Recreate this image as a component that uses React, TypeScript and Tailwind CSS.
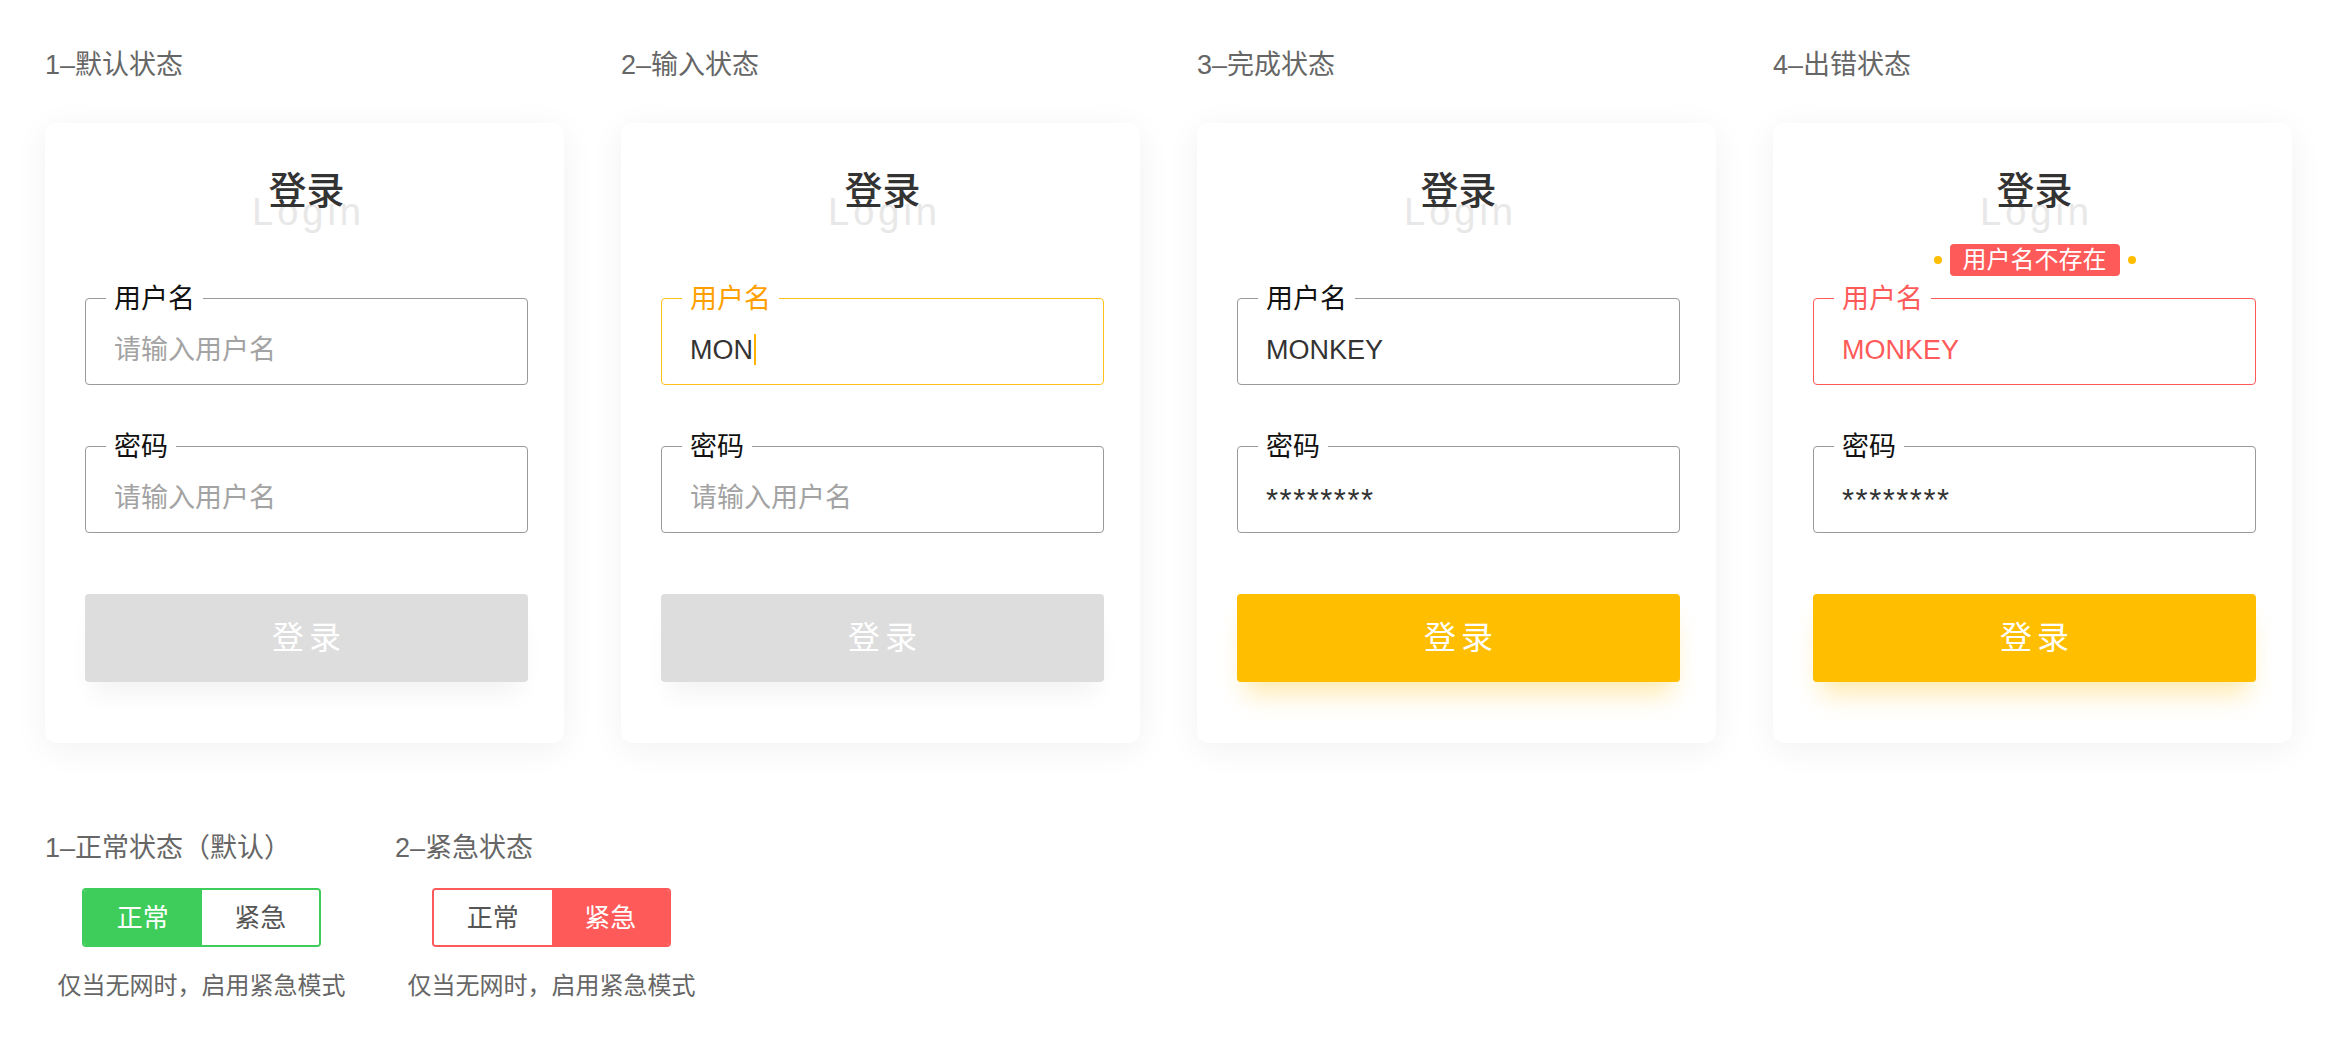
import type { ReactNode } from "react";

type Tone = "idle" | "focus" | "error";

const boxBorder: Record<Tone, string> = {
    idle: "border-[#9a9a9a]",
    focus: "border-[#FFC21A]",
    error: "border-[#FF5A5A]",
};

const labelColor: Record<Tone, string> = {
    idle: "text-[#111]",
    focus: "text-[#FF9F00]",
    error: "text-[#FF5A5A]",
};

const Field = ({ label, tone = "idle", children }: { label: string; tone?: Tone; children: ReactNode }) => {
    return (
        <div className={`relative h-[87px] rounded-[4px] border ${boxBorder[tone]} pl-[28px] pt-[16px] flex items-center`}>
            <span
                className={`absolute left-[20px] top-0 -translate-y-1/2 bg-white px-[8px] text-[27px] leading-[30px] ${labelColor[tone]}`}
            >
                {label}
            </span>
            {children}
        </div>
    );
};

const Placeholder = () => <span className="text-[27px] leading-[34px] text-[#a3a3a3]">请输入用户名</span>;

const LoginCard = ({
    user,
    password,
    userTone = "idle",
    ready = false,
    error,
}: {
    user?: ReactNode;
    password?: ReactNode;
    userTone?: Tone;
    ready?: boolean;
    error?: string;
}) => {
    return (
        <div className="w-[519px] rounded-[12px] bg-white shadow-[0_6px_34px_rgba(0,0,0,0.06)] pl-[40px] pr-[36px] pt-[46px] pb-[61px]">
            <div className="relative h-[44px] flex justify-center">
                <span className="absolute top-[21px] left-0 right-0 text-center pl-[4px] text-[38px] leading-[44px] tracking-[4px] text-[#e8e8e8] font-['Liberation_Sans',sans-serif]">
                    Login
                </span>
                <span className="relative text-[38px] leading-[44px] font-medium text-[#333]">登录</span>
            </div>

            <div className="relative mt-[85px]">
                {error && (
                    <div className="absolute left-1/2 -translate-x-1/2 top-[-54px] flex items-center gap-[8px] z-10">
                        <span className="size-[8px] rounded-full bg-[#FFBE00]" />
                        <span className="h-[32px] px-[13px] rounded-[4px] bg-[#FF5A5A] text-white text-[24px] leading-[32px] whitespace-nowrap">
                            {error}
                        </span>
                        <span className="size-[8px] rounded-full bg-[#FFBE00]" />
                    </div>
                )}
                <Field label="用户名" tone={userTone}>
                    {user ?? <Placeholder />}
                </Field>
            </div>

            <div className="mt-[61px]">
                <Field label="密码">{password ?? <Placeholder />}</Field>
            </div>

            <button
                className={`mt-[61px] w-full h-[88px] rounded-[4px] flex items-center justify-center text-white text-[32px] leading-[40px] tracking-[5px] pl-[5px] ${
                    ready
                        ? "bg-[#FFBF00] shadow-[0_20px_26px_-8px_rgba(255,191,0,0.32)]"
                        : "bg-[#DDDDDD] shadow-[0_20px_26px_-8px_rgba(0,0,0,0.05)]"
                }`}
            >
                登录
            </button>
        </div>
    );
};

const Stage = ({ title, children }: { title: string; children: ReactNode }) => {
    return (
        <div className="flex flex-col">
            <div className="text-[27px] leading-[36px] text-[#666]">{title}</div>
            <div className="mt-[40px]">{children}</div>
        </div>
    );
};

const Stars = () => (
    <span className="text-[31px] leading-[34px] tracking-[1.5px] text-[#333] translate-y-[3px]">********</span>
);

const ModeToggle = ({ urgent }: { urgent?: boolean }) => {
    const fill = urgent ? "bg-[#FF5A5A]" : "bg-[#3ECC5A]";
    return (
        <div
            className={`w-[239px] h-[59px] rounded-[4px] border-2 overflow-hidden flex text-[26px] leading-[34px] ${
                urgent ? "border-[#FF5A5A]" : "border-[#3ECC5A]"
            }`}
        >
            <div className={`flex-1 flex items-center justify-center ${urgent ? "bg-white text-[#555]" : `${fill} text-white`}`}>
                正常
            </div>
            <div className={`flex-1 flex items-center justify-center ${urgent ? `${fill} text-white` : "bg-white text-[#555]"}`}>
                紧急
            </div>
        </div>
    );
};

const ModeGroup = ({ title, urgent }: { title: string; urgent?: boolean }) => {
    return (
        <div className="w-[350px] flex flex-col">
            <div className="text-[27px] leading-[36px] text-[#666] whitespace-nowrap">{title}</div>
            <div className="w-[313px] mt-[22px] flex flex-col items-center">
                <ModeToggle urgent={urgent} />
                <div className="mt-[23px] text-[24px] leading-[32px] text-[#666] whitespace-nowrap">
                    仅当无网时，启用紧急模式
                </div>
            </div>
        </div>
    );
};

export default function App() {
    return (
        <div className="w-[2340px] h-[1044px] bg-white pl-[45px] pt-[47px] font-['Liberation_Sans','Noto_Sans_CJK_SC',sans-serif]">
            <div className="flex gap-[57px]">
                <Stage title="1–默认状态">
                    <LoginCard />
                </Stage>
                <Stage title="2–输入状态">
                    <LoginCard
                        userTone="focus"
                        user={
                            <span className="flex items-center text-[27px] leading-[34px] text-[#333]">
                                MON
                                <span className="ml-[1px] w-[2px] h-[31px] bg-[#FFB400]" />
                            </span>
                        }
                    />
                </Stage>
                <Stage title="3–完成状态">
                    <LoginCard
                        ready
                        user={<span className="text-[27px] leading-[34px] text-[#333]">MONKEY</span>}
                        password={<Stars />}
                    />
                </Stage>
                <Stage title="4–出错状态">
                    <LoginCard
                        ready
                        userTone="error"
                        error="用户名不存在"
                        user={<span className="text-[27px] leading-[34px] text-[#FF5A5A]">MONKEY</span>}
                        password={<Stars />}
                    />
                </Stage>
            </div>

            <div className="mt-[87px] flex">
                <ModeGroup title="1–正常状态（默认）" />
                <ModeGroup title="2–紧急状态" urgent />
            </div>
        </div>
    );
}
